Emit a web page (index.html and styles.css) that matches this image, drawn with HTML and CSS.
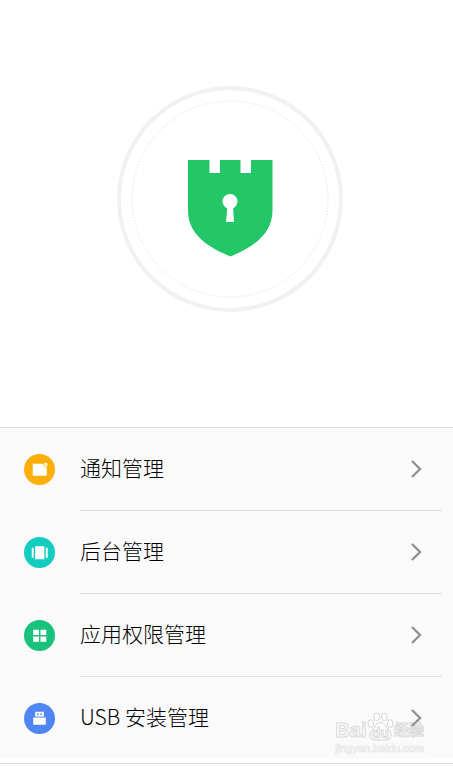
FILE: index.html
```html
<!DOCTYPE html>
<html lang="zh-CN">
<head>
    <meta charset="UTF-8">
    <meta name="viewport" content="width=device-width, initial-scale=1.0">
    <title>权限管理</title>
    <link rel="stylesheet" href="styles.css">
</head>
<body>
    <div class="hero">
        <svg class="shield" viewBox="0 0 226 226" aria-hidden="true">
            <circle cx="113" cy="113" r="111" fill="none" stroke="#f1f1f1" stroke-width="4"/>
            <circle cx="113" cy="113" r="98" fill="none" stroke="#d8d8d8" stroke-width="1" stroke-dasharray="1 2"/>
            <path fill="#24c768" d="M71 74h21.500v13h10.500v-13h20.500v13h10.500v-13h21.500v50c0 22-15 35-42 46.500C86 159 71 146 71 124z"/>
            <circle cx="113" cy="115.500" r="7.500" fill="#fff"/>
            <path fill="#fff" d="M110.500 120h5.500l1 16h-8z"/>
        </svg>
    </div>
    <ul class="menu">
        <li class="menu-row">
            <svg class="icon" viewBox="0 0 32 32" aria-hidden="true">
                <circle cx="16" cy="16" r="16" fill="#fbaf08"/>
                <path fill="#fff" d="M9 10h10.500a3.500 3.500 0 0 0 4 4v8.500H9z"/>
                <circle cx="22.300" cy="11" r="2.300" fill="#fdeeb8"/>
            </svg>
            <a class="item" href="#">
                <span class="label">通知管理</span>
                <svg class="arrow" viewBox="0 0 12 20" aria-hidden="true"><path d="M2 2l8 8-8 8"/></svg>
            </a>
        </li>
        <li class="menu-row">
            <svg class="icon" viewBox="0 0 32 32" aria-hidden="true">
                <circle cx="16" cy="16" r="16" fill="#13cdc1"/>
                <path fill="#fff" d="M11.500 9.500h9.500v13.500h-9.500zM8 11h2v10.500H8zM22.500 11h2v10.500h-2z"/>
            </svg>
            <a class="item" href="#">
                <span class="label">后台管理</span>
                <svg class="arrow" viewBox="0 0 12 20" aria-hidden="true"><path d="M2 2l8 8-8 8"/></svg>
            </a>
        </li>
        <li class="menu-row">
            <svg class="icon" viewBox="0 0 32 32" aria-hidden="true">
                <circle cx="16" cy="16" r="16" fill="#18c17c"/>
                <path fill="#fff" d="M9.500 10h6v5.500h-6zM17 10h6v5.500h-6zM9.500 17h6v5.500h-6zM17 17h6v5.500h-6z"/>
            </svg>
            <a class="item" href="#">
                <span class="label">应用权限管理</span>
                <svg class="arrow" viewBox="0 0 12 20" aria-hidden="true"><path d="M2 2l8 8-8 8"/></svg>
            </a>
        </li>
        <li class="menu-row">
            <svg class="icon" viewBox="0 0 32 32" aria-hidden="true">
                <circle cx="16" cy="16" r="16" fill="#4f86f4"/>
                <path fill="#fff" d="M11.500 9h9v5h-9zM9.500 15h13v7.500h-13z"/>
                <path fill="#4f86f4" d="M13.500 10.500h1.500v2h-1.500zM17 10.500h1.500v2H17z"/>
            </svg>
            <a class="item" href="#">
                <span class="label">USB 安装管理</span>
                <svg class="arrow" viewBox="0 0 12 20" aria-hidden="true"><path d="M2 2l8 8-8 8"/></svg>
            </a>
        </li>
    </ul>
    <div class="next-section"></div>
    <div class="watermark">
        <div class="brand">
            <span class="brand-latin">Bai</span>
            <span class="paw">
                <svg viewBox="0 0 28 30" aria-hidden="true">
                    <g fill="#fdfdfd" stroke="#d2d2d2" stroke-width="1">
                        <ellipse cx="4" cy="12" rx="3" ry="4"/>
                        <ellipse cx="10" cy="5" rx="3" ry="4"/>
                        <ellipse cx="18" cy="5" rx="3" ry="4"/>
                        <ellipse cx="24" cy="12" rx="3" ry="4"/>
                        <path d="M14 11c5 0 5 5 9 8 4 4 2 10-3 10H8c-5 0-7-6-3-10 4-3 4-8 9-8z"/>
                    </g>
                </svg>
                <span class="paw-text">du</span>
            </span>
            <span class="brand-cjk">经验</span>
        </div>
        <div class="site">jingyan.baidu.com</div>
    </div>
</body>
</html>
```
FILE: styles.css
```css
* {
    box-sizing: border-box;
}
body {
    position: relative;
    display: flex;
    flex-direction: column;
    min-height: 100vh;
    margin: 0;
    background-color: #fff;
    color: #000;
    font-family: "Noto Sans CJK SC", "Liberation Sans", sans-serif;
}
.hero {
    display: flex;
    justify-content: center;
    padding: 86px 0 115px 7px;
}
.shield {
    display: block;
    width: 226px;
    height: 226px;
}
.menu {
    margin: 0;
    padding: 0;
    list-style: none;
    background-color: #fafafa;
    border-top: 1px solid #dedede;
}
.menu-row {
    display: flex;
    align-items: center;
    gap: 25px;
    padding: 0 11px 0 24px;
}
.icon {
    flex: none;
    width: 31px;
    height: 31px;
}
.item {
    position: relative;
    z-index: 1;
    display: flex;
    flex: 1;
    align-items: center;
    justify-content: space-between;
    height: 83px;
    padding-right: 20px;
    border-bottom: 1px solid #e0e0e0;
    color: inherit;
    font-size: 21px;
    font-weight: 300;
    line-height: 30px;
    text-decoration: none;
}
.label {
    padding-bottom: 4px;
}
.menu-row:last-child .item {
    height: 82px;
    border-bottom: none;
}
.arrow {
    width: 12px;
    height: 20px;
    fill: none;
    stroke: #929292;
    stroke-width: 2.4;
}
.next-section {
    flex: 1;
    margin-top: 4px;
    background-color: #fafafa;
    border-top: 1px solid #dedede;
}

/* watermark sits between the row background and its arrow */
.watermark {
    position: absolute;
    right: 29px;
    bottom: 11px;
    color: #fdfdfd;
    font-family: "Liberation Sans", "Noto Sans CJK SC", sans-serif;
    -webkit-text-stroke: 1px #dadada;
    pointer-events: none;
}
.brand {
    display: flex;
    align-items: flex-end;
    justify-content: space-between;
    line-height: 22px;
}
.brand-latin {
    font-size: 20px;
    font-weight: bold;
}
.paw {
    position: relative;
    width: 27px;
    height: 29px;
}
.paw svg {
    display: block;
    width: 27px;
    height: 29px;
}
.paw-text {
    position: absolute;
    right: 0;
    bottom: 0;
    left: 0;
    font-size: 14px;
    font-weight: bold;
    line-height: 16px;
    text-align: center;
}
.brand-cjk {
    font-size: 15px;
    font-weight: bold;
}
.site {
    font-size: 11px;
    line-height: 14px;
    -webkit-text-stroke: 1px #ebebeb;
}
```
